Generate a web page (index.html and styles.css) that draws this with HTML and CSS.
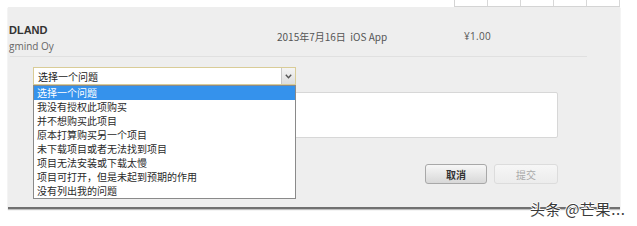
FILE: index.html
```html
<!DOCTYPE html>
<html lang="zh-CN">
<head>
<meta charset="utf-8">
<link rel="stylesheet" href="styles.css">
</head>
<body>
<div class="page">
  <div class="top">
    <div class="grid">
      <span class="cell"></span><span class="cell"></span><span class="cell"></span><span class="cell"></span><span class="cell"></span>
    </div>
  </div>
  <div class="panel">
    <div class="header">
      <div class="name">
        <div class="title">DLAND</div>
        <div class="dev">gmind Oy</div>
      </div>
      <div class="date">2015年7月16日&nbsp; iOS App</div>
      <div class="price">¥1.00</div>
    </div>
    <div class="form">
      <div class="select-wrap">
        <div class="select">
          <span class="select-text">选择一个问题</span>
          <span class="arrow">
            <svg width="7" height="5" viewBox="0 0 7 5"><path d="M0.8 0.8 L3.5 3.8 L6.2 0.8" fill="none" stroke="#555" stroke-width="1.4"/></svg>
          </span>
        </div>
        <ul class="options">
          <li class="active">选择一个问题</li>
          <li>我没有授权此项购买</li>
          <li>并不想购买此项目</li>
          <li>原本打算购买另一个项目</li>
          <li>未下载项目或者无法找到项目</li>
          <li>项目无法安装或下载太慢</li>
          <li>项目可打开，但是未起到预期的作用</li>
          <li>没有列出我的问题</li>
        </ul>
      </div>
      <div class="textarea"></div>
      <div class="buttons">
        <button class="btn cancel">取消</button>
        <button class="btn submit">提交</button>
      </div>
    </div>
  </div>
  <div class="watermark">头条 @芒果...</div>
</div>
</body>
</html>
```

FILE: styles.css
```css
* { box-sizing: border-box; }
html, body { margin: 0; padding: 0; background: #fff; }
body {
  width: 637px;
  height: 226px;
  overflow: hidden;
  font-family: "Noto Sans CJK SC", "Noto Sans", sans-serif;
}
.page { position: relative; width: 637px; height: 226px; }
.top {
  height: 7px;
  display: flex;
  justify-content: flex-end;
  padding-right: 17px;
}
.grid { display: flex; height: 7px; border-bottom: 1px solid #d4d4d4; border-left: 1px solid #d4d4d4; }
.cell { width: 33px; height: 6px; border-right: 1px solid #d8d8d8; }
.panel {
  margin-left: 8px;
  width: 612px;
  height: 202px;
  background: #eeeeee;
  border-bottom: 2px solid #707070;
  box-shadow: 0 1px 1px rgba(0,0,0,0.25);
}
.header {
  margin-left: 2px;
  width: 577px;
  height: 50px;
  padding-top: 13px;
  border-bottom: 1px solid #e0e0e0;
  display: flex;
  align-items: center;
}
.name { width: 268px; margin-left: -1px; line-height: 14px; }
.title { font-family: "Liberation Sans", Arial, sans-serif; font-weight: bold; font-size: 11px; color: #333; }
.dev { font-family: "Open Sans", "Noto Sans", sans-serif; font-size: 10px; color: #666; margin-top: 2px; }
.date { width: 187px; font-size: 10px; color: #555; margin-top: -4px; }
.price { font-family: "Open Sans", sans-serif; font-size: 10px; color: #555; margin-top: -4px; letter-spacing: 0.3px; }
.form { padding-left: 25px; padding-top: 10px; }
.select-wrap { position: relative; width: 263px; }
.select {
  height: 18px;
  background: #fff;
  border: 1px solid #d9cc97;
  display: flex;
  align-items: center;
  padding-left: 4px;
}
.select-text { flex: 1; font-size: 10px; color: #222; }
.arrow {
  width: 14px;
  height: 16px;
  background: linear-gradient(#f4f4f4, #dedede);
  border-left: 1px solid #c8c8c8;
  display: flex;
  align-items: center;
  justify-content: center;
}
.options {
  position: absolute;
  top: 18px;
  left: 0;
  width: 263px;
  margin: 0;
  padding: 0;
  list-style: none;
  background: #fff;
  border: 1px solid #8a8a8a;
  z-index: 2;
}
.options li {
  height: 14px;
  line-height: 14px;
  font-size: 10px;
  color: #2a2a2a;
  padding-left: 3px;
}
.options li.active { background: #3592ec; color: #fff; }
.textarea {
  margin-top: 7px;
  width: 525px;
  height: 46px;
  background: #fff;
  border: 1px solid #d7d7d7;
  border-radius: 2px;
}
.buttons {
  margin-top: 26px;
  width: 525px;
  display: flex;
  justify-content: flex-end;
  gap: 7px;
}
.btn {
  height: 20px;
  padding: 0;
  font-family: "Noto Sans CJK SC", sans-serif;
  font-size: 10px;
  border-radius: 3px;
}
.cancel {
  width: 62px;
  font-weight: bold;
  color: #333;
  background: linear-gradient(#f7f7f7, #d8d8d8);
  border: 1px solid #a8a8a8;
}
.submit {
  width: 64px;
  color: #aaa;
  background: linear-gradient(#f6f6f6, #ececec);
  border: 1px solid #dcdcdc;
}
.watermark {
  position: absolute;
  left: 530px;
  top: 198px;
  font-size: 15px;
  color: #3a3a3a;
  letter-spacing: 0.6px;
  text-shadow: 1px 0 #fff, -1px 0 #fff, 0 1px #fff, 0 -1px #fff;
}
```
